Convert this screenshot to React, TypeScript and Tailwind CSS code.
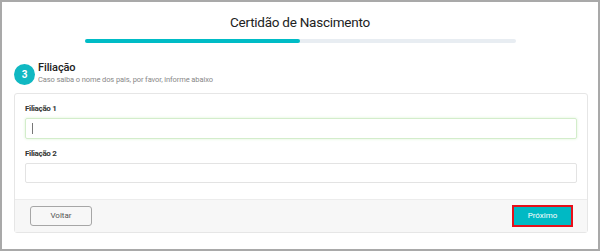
export default function App() {
  return (
    <div className="w-[600px] h-[251px] border-2 border-[#a9a9a9] bg-white font-['Roboto',sans-serif] text-[#333]">
      <div className="flex flex-col items-center pt-[10px]">
        <h1 className="text-[13.5px] leading-[20px] tracking-[-0.25px] text-[#222]">Certidão de Nascimento</h1>
        <div className="mt-[7px] h-[4px] w-[431px] rounded-full bg-[#e8edf2]">
          <div className="h-full w-1/2 rounded-full bg-[#00bcc6]" />
        </div>
      </div>

      <div className="mt-[21px] ml-[12px] flex items-center gap-[2px]">
        <div className="grid h-[21px] w-[21px] place-items-center rounded-full bg-[#10b8c2] text-[10px] font-bold text-white">
          3
        </div>
        <div className="-mt-[4px] ml-[1px]">
          <div className="text-[11px] leading-[14px] font-medium tracking-[-0.1px] text-[#222]">Filiação</div>
          <div className="text-[7.5px] leading-[10px] tracking-[-0.1px] text-[#888]">Caso saiba o nome dos pais, por favor, informe abaixo</div>
        </div>
      </div>

      <div className="mt-[8px] ml-[12px] mr-[10px] rounded-[3px] border border-[#e6e6e6]">
        <div className="px-[10px] pt-[9px] pb-[16px]">
          <label className="block text-[8px] leading-[12px] font-bold tracking-[-0.3px] text-[#333]">Filiação 1</label>
          <div className="mt-[3px] flex h-[21px] items-center rounded-[2px] border border-[#d3edcb] px-[6px] shadow-[0_0_3px_#dcf2d5]">
            <span className="h-[11px] w-[1px] bg-[#777]" />
          </div>
          <label className="mt-[9px] block text-[8px] leading-[12px] font-bold tracking-[-0.3px] text-[#333]">Filiação 2</label>
          <div className="mt-[3px] h-[20px] rounded-[2px] border border-[#e3e3e3]" />
        </div>
        <div className="flex h-[33px] items-center justify-between border-t border-[#ececec] bg-[#f7f7f7] pl-[15px] pr-[14px]">
          <button className="h-[20px] w-[62px] rounded-[3px] border border-[#a6a6a6] bg-[#f7f7f7] text-[8px] text-[#555]">
            Voltar
          </button>
          <button className="h-[22px] w-[61px] border-2 border-[#e8101a] bg-[#00b9c4] text-[8px] text-white">
            Próximo
          </button>
        </div>
      </div>
    </div>
  );
}
